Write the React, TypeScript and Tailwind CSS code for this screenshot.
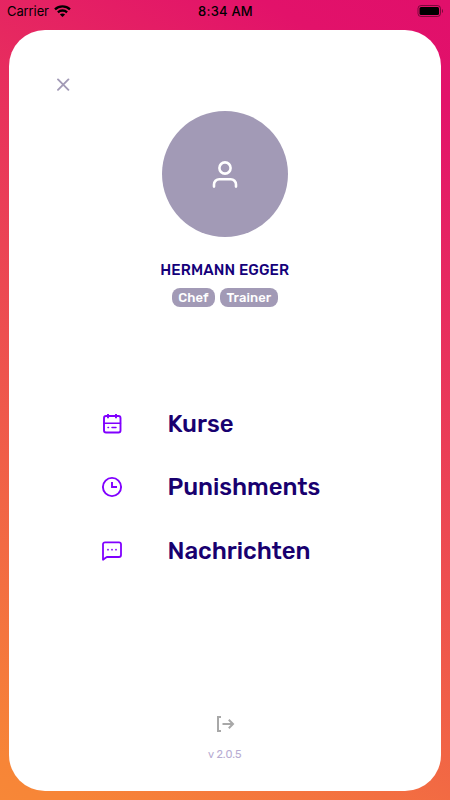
import type { ReactNode } from "react"

interface MenuItem {
  label: string
  icon: ReactNode
}

const CalendarIcon = () => (
  <svg width="24" height="24" viewBox="0 0 24 24" fill="none" stroke="currentColor" strokeWidth="1.9" strokeLinecap="round" strokeLinejoin="round">
    <rect x="4" y="4" width="16.5" height="16.5" rx="2" />
    <path d="M8 2V6.2M16 2V6.2" strokeLinecap="butt" />
    <path d="M4 11.3H20.5" strokeWidth="1.4" />
    <path d="M8 15.5H8.5M12 15.5H16" strokeWidth="1.5" />
  </svg>
)

const ClockIcon = () => (
  <svg width="24" height="24" viewBox="0 0 24 24" fill="none" stroke="currentColor" strokeWidth="1.9" strokeLinecap="butt" strokeLinejoin="miter">
    <circle cx="12" cy="12" r="9.1" />
    <path d="M12 7V12H17" />
  </svg>
)

const MessageIcon = () => (
  <svg width="24" height="24" viewBox="0 0 24 24" fill="none" stroke="currentColor" strokeWidth="1.8" strokeLinecap="round" strokeLinejoin="round">
    <path d="M3 20.8V5.3a2 2 0 0 1 2-2H19a2 2 0 0 1 2 2V16a2 2 0 0 1-2 2H7.3a2 2 0 0 0-1.3.5Z" />
    <path d="M8 10.7H8.01M12 10.7H12.01M16 10.7H16.01" />
  </svg>
)

const menuItems: MenuItem[] = [
  { label: "Kurse", icon: <CalendarIcon /> },
  { label: "Punishments", icon: <ClockIcon /> },
  { label: "Nachrichten", icon: <MessageIcon /> },
]

const roles = ["Chef", "Trainer"]

function StatusBar() {
  return (
    <div className="grid h-[30px] grid-cols-3 items-start pt-[3px] pr-[6px] pl-[7px] font-['Inter',sans-serif] text-black">
      <div className="flex items-center gap-[5px]">
        <span className="text-[13px] leading-4 tracking-[-0.1px]">Carrier</span>
        <svg width="17" height="12" viewBox="0 0 17 12" fill="none" stroke="currentColor" strokeWidth="2.3">
          <path d="M1 4.4C5.2 0.4 11.8 0.4 16 4.4" />
          <path d="M3.9 7.3C6.5 4.9 10.5 4.9 13.1 7.3" />
          <path d="M8.5 12L5.9 9.4C7.4 8.1 9.6 8.1 11.1 9.4Z" fill="currentColor" stroke="none" />
        </svg>
      </div>
      <span className="text-center text-[13px] leading-4 font-medium tracking-[0.2px]">8:34 AM</span>
      <svg className="mt-[2px] justify-self-end" width="27" height="12" viewBox="0 0 27 12" fill="none">
        <rect x="1" y="0.5" width="22.5" height="11" rx="3" stroke="black" strokeOpacity="0.45" />
        <rect x="2.5" y="2" width="19.5" height="8" rx="1.5" fill="black" />
        <path d="M25 4V8C26.3 7.3 26.3 4.7 25 4Z" fill="black" fillOpacity="0.5" />
      </svg>
    </div>
  )
}

export default function App() {
  return (
    <div className="flex h-[800px] w-[450px] flex-col overflow-hidden bg-[linear-gradient(209deg,#e10f6b_0%,#e2126a_10%,#f78537_96%,#f78737_100%)] font-['Rubik','Roboto',sans-serif]">
      <StatusBar />

      <div className="mr-[9px] ml-[8.5px] flex h-[761px] flex-col items-center rounded-[36px] bg-white">
        <button className="mt-[48px] ml-[48px] self-start text-[#a29ab6]">
          <svg width="13" height="13" viewBox="0 0 13 13" fill="none" stroke="currentColor" strokeWidth="1.9" strokeLinecap="round">
            <path d="M1 1.4L11.4 11.8M11.4 1.4L1 11.8" />
          </svg>
        </button>

        {/* Profile */}
        <div className="mt-5 flex size-[126px] items-center justify-center rounded-full bg-[#a29ab6] text-white">
          <svg width="28" height="30" viewBox="0 0 28 30" fill="none" stroke="currentColor" strokeWidth="2.6" strokeLinecap="round">
            <circle cx="14" cy="9" r="5.6" />
            <path d="M3 27.6V25.5a5.3 5.3 0 0 1 5.3-5.3H19.7a5.3 5.3 0 0 1 5.3 5.3V27.6" />
          </svg>
        </div>
        <h1 className="mt-[23px] text-[15px] leading-5 font-medium tracking-[0.15px] text-[#14007a]">HERMANN EGGER</h1>
        <div className="mt-2 flex gap-[5px] text-[13px] leading-[19px] font-medium text-white">
          {roles.map((role) => (
            <span key={role} className="rounded-[8px] bg-[#a29ab6] px-[6.5px] text-center tracking-[0.1px]">
              {role}
            </span>
          ))}
        </div>

        {/* Navigation */}
        <nav className="mt-[85px] flex w-full flex-col pl-[91px]">
          {menuItems.map((item) => (
            <a key={item.label} className="flex h-[63.5px] items-center gap-[44px] text-[#8000ff]">
              {item.icon}
              <span className="text-2xl font-medium tracking-[-0.05px] text-[#18006f]">{item.label}</span>
            </a>
          ))}
        </nav>

        {/* Footer */}
        <div className="mt-auto mb-[28px] flex flex-col items-center">
          <svg className="text-[#a8a8a8]" width="20" height="18" viewBox="0 0 20 18" fill="none" stroke="currentColor" strokeWidth="2">
            <path d="M6 2H3V16H6" />
            <path d="M7.5 9H18M13.8 4.8L18 9L13.8 13.2" />
          </svg>
          <span className="mt-[14px] text-[11px] leading-4 text-[#b7acd2]">v 2.0.5</span>
        </div>
      </div>
    </div>
  )
}
